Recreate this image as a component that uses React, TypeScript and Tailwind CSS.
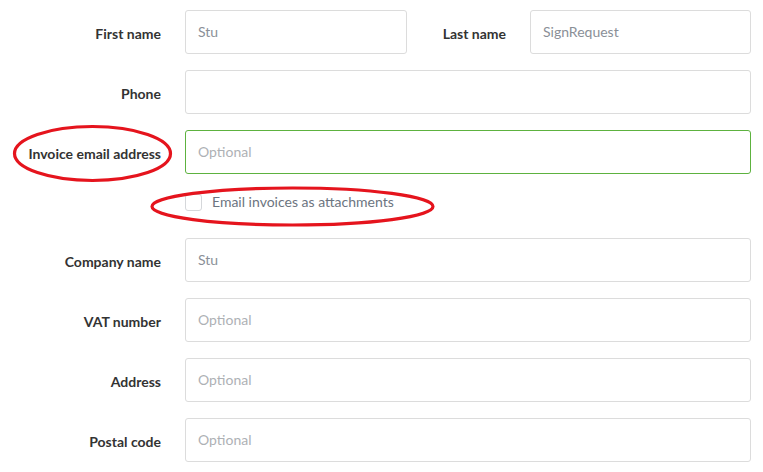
import React from "react";

const font = { fontFamily: "Lato, 'Open Sans', sans-serif" };

function Label({ children }: { children: React.ReactNode }) {
  return (
    <label className="w-[161px] shrink-0 pt-[2px] text-right text-[14px] font-bold text-[#333]">
      {children}
    </label>
  );
}

function Field({ value, placeholder, green, className = "" }: { value?: string; placeholder?: string; green?: boolean; className?: string }) {
  return (
    <div
      className={
        "h-11 rounded-[3px] border bg-white flex items-center px-3 pb-[1px] text-[14px] " +
        (green ? "border-[#5db23f] " : "border-[#dcdcdc] ") +
        className
      }
    >
      {value ? (
        <span className="text-[#8a8f97]">{value}</span>
      ) : (
        <span className="text-[#aeb1b5]">{placeholder}</span>
      )}
    </div>
  );
}

export default function App() {
  return (
    <div className="relative w-[763px] h-[472px] bg-white overflow-hidden" style={font}>
      <div className="pt-[10px] pr-3 flex flex-col">
        {/* Name row */}
        <div className="flex items-center gap-6">
          <Label>First name</Label>
          <Field value="Stu" className="w-[222px]" />
          <div className="flex-1 flex items-center -ml-6">
            <span className="flex-1 text-right pr-6 pt-[2px] text-[14px] font-bold text-[#333]">Last name</span>
            <Field value="SignRequest" className="w-[221px]" />
          </div>
        </div>

        <div className="flex items-center gap-6 mt-4">
          <Label>Phone</Label>
          <Field className="flex-1" />
        </div>

        <div className="flex items-center gap-6 mt-4">
          <Label>Invoice email address</Label>
          <Field placeholder="Optional" green className="flex-1" />
        </div>

        {/* Checkbox */}
        <div className="flex items-center mt-[19px] h-[18px] pl-[185px]">
          <span className="w-[17px] h-[17px] rounded-[3px] border border-[#d5d7da] bg-white" />
          <span className="ml-[10px] -mt-[1px] text-[14px] text-[#6c7480]">Email invoices as attachments</span>
        </div>

        <div className="flex items-center gap-6 mt-[27px]">
          <Label>Company name</Label>
          <Field value="Stu" className="flex-1" />
        </div>

        <div className="flex items-center gap-6 mt-4">
          <Label>VAT number</Label>
          <Field placeholder="Optional" className="flex-1" />
        </div>

        <div className="flex items-center gap-6 mt-4">
          <Label>Address</Label>
          <Field placeholder="Optional" className="flex-1" />
        </div>

        <div className="flex items-center gap-6 mt-4">
          <Label>Postal code</Label>
          <Field placeholder="Optional" className="flex-1" />
        </div>
      </div>

      {/* hand-drawn red annotations */}
      <svg className="absolute inset-0 pointer-events-none" width="763" height="472">
        <ellipse cx="92.5" cy="153.5" rx="78" ry="27" fill="none" stroke="#e5141d" strokeWidth="3.2" />
        <ellipse cx="292.5" cy="206.5" rx="140.5" ry="18.5" fill="none" stroke="#e5141d" strokeWidth="3.2" />
      </svg>
    </div>
  );
}
